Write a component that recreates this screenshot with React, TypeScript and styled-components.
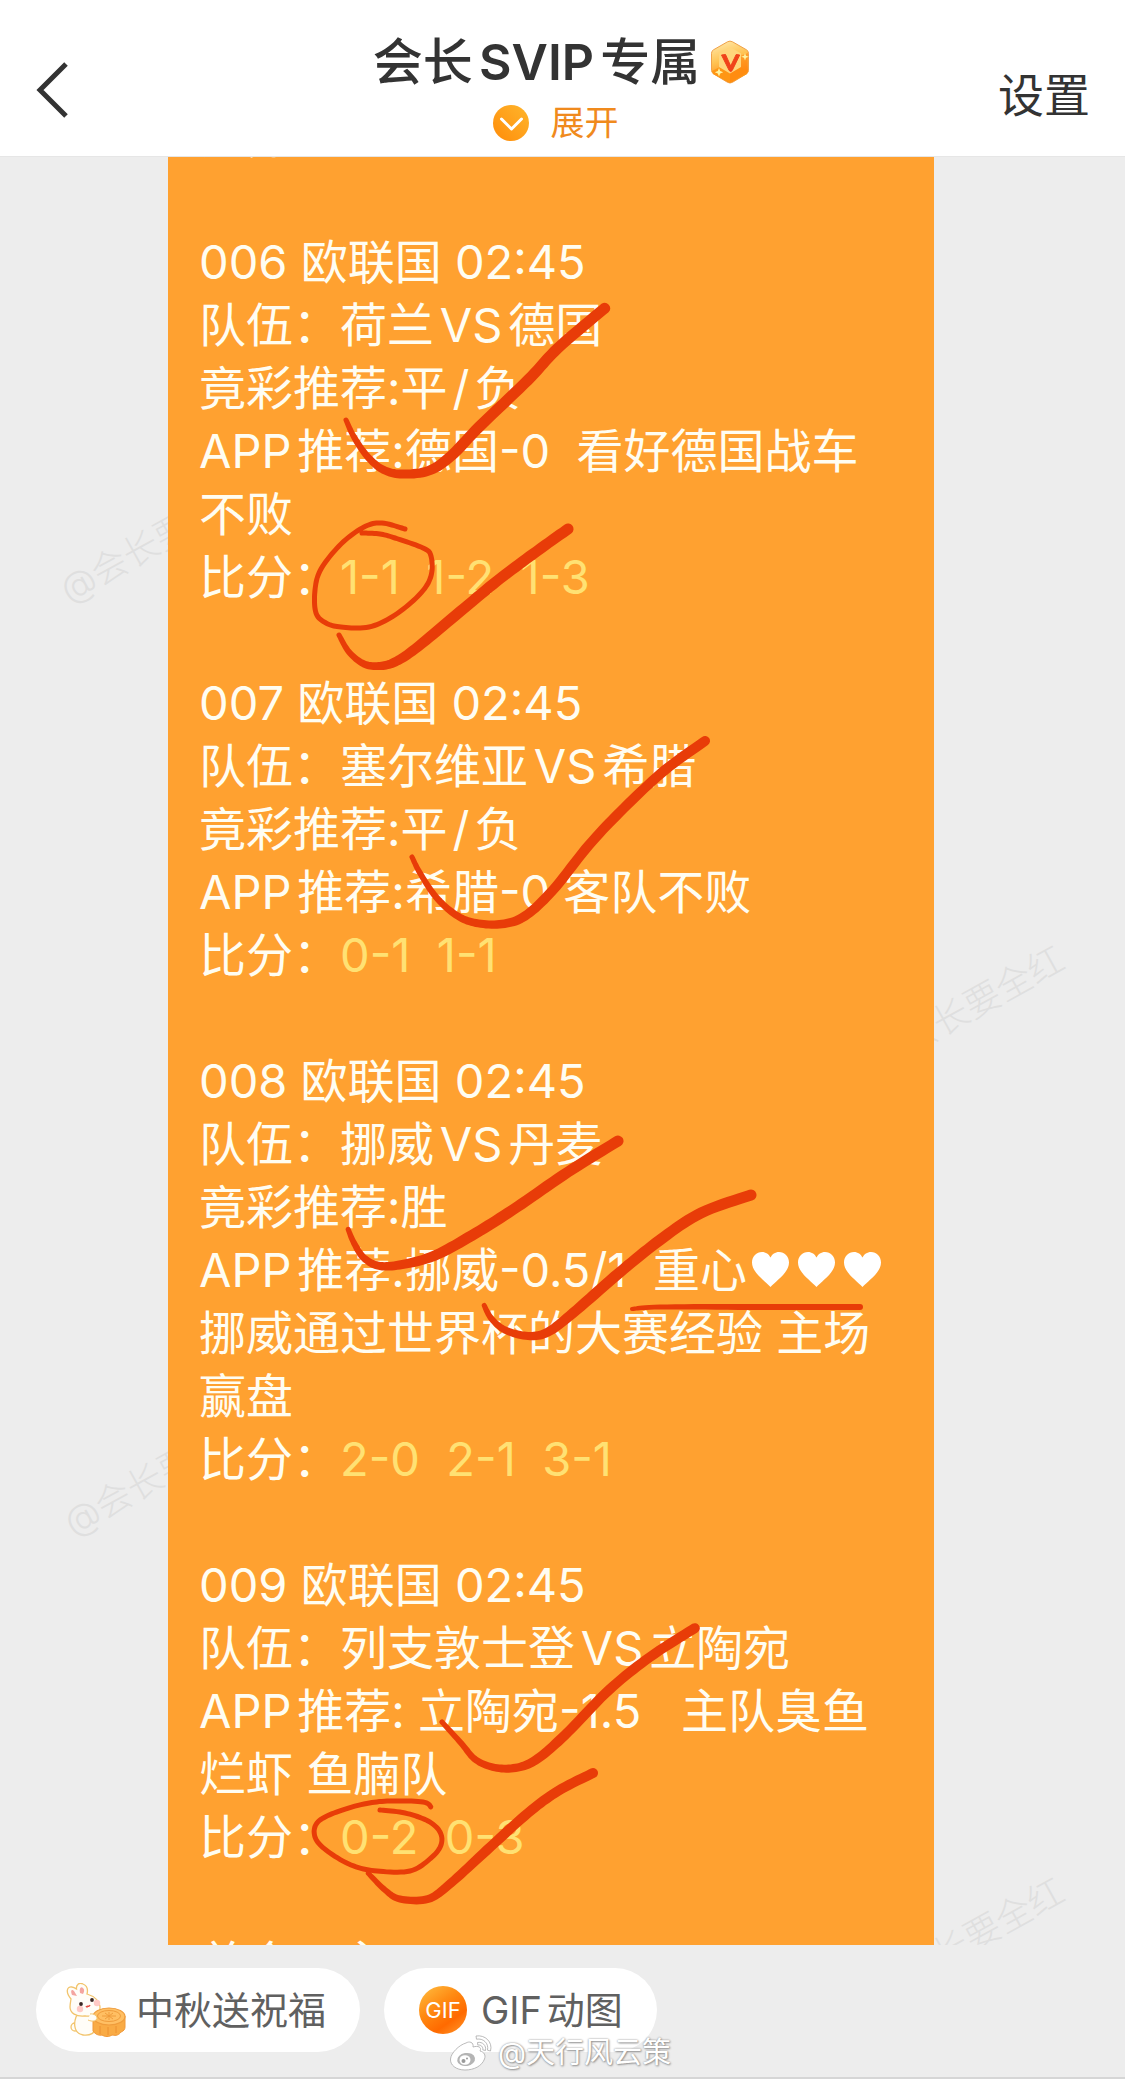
import React from "react";
import styled, { createGlobalStyle } from "styled-components";

const GlobalStyle = createGlobalStyle`
  * { box-sizing: border-box; }
  body {
    margin: 0;
    background: #ededed;
    font-family: Inter, "Noto Sans CJK SC", sans-serif;
    text-autospace: normal;
  }
  button {
    border: 0;
    margin: 0;
    padding: 0;
    background: none;
    color: inherit;
    font: inherit;
    cursor: pointer;
  }
  h1, p { margin: 0; }
  svg { display: block; flex: none; }
`;

const Screen = styled.div`
  position: relative;
  display: flex;
  flex-direction: column;
  height: 100vh;
`;

const Header = styled.header`
  display: grid;
  grid-template-columns: 1fr auto 1fr;
  flex: none;
  height: 157px;
  padding: 32px 35px 0 33px;
  background: #fff;
  border-bottom: 1px solid #e6e6e6;
  color: #333;
`;

const BackButton = styled.button`
  justify-self: start;
  align-self: start;
  padding: 28px 0 0 2px;
`;

const SettingsButton = styled.button`
  justify-self: end;
  align-self: start;
  padding-top: 33px;
  font-size: 46px;
  line-height: 60px;
`;

const Heading = styled.div`
  display: flex;
  flex-direction: column;
  align-items: center;
`;

const Title = styled.h1`
  display: flex;
  align-items: center;
  gap: 10px;
  font-size: 50px;
  line-height: 60px;
  font-weight: 500;
`;

const TitleLatin = styled.b`
  font-weight: 600;
`;

const ExpandButton = styled.button`
  display: flex;
  align-items: center;
  gap: 22px;
  height: 62px;
  padding-right: 12px;
  font-size: 34px;
  line-height: 40px;
  color: #f08a1d;
`;

const Chat = styled.main`
  position: relative;
  flex: 1;
  min-height: 0;
  overflow: hidden;
  padding: 0 191px 0 168px;
`;

const Watermark = styled.span<{ $x: number; $y: number }>`
  position: absolute;
  left: ${(p) => p.$x}px;
  top: ${(p) => p.$y}px;
  transform: translate(-50%, -50%) rotate(-29deg);
  font-size: 36px;
  line-height: 40px;
  white-space: nowrap;
  font-weight: 300;
  color: #dfdfdf;
`;

const Card = styled.article`
  position: relative;
  height: 100%;
  overflow: hidden;
  background: #ffa130;
`;

const Feed = styled.div`
  display: flex;
  flex-direction: column;
  gap: 63px;
  margin-top: -53px;
  padding: 0 31px;
`;

const Match = styled.p`
  font-size: 47px;
  line-height: 63px;
  font-weight: 400;
  white-space: pre;
  color: #fffdf2;
`;

const Slash = styled.span`
  margin: 0 5px;
`;

const Score = styled.span`
  color: #ffe173;
`;

const Hearts = styled.span`
  display: inline-flex;
  gap: 9px;
  margin-left: 5px;
`;

const Ink = styled.svg`
  position: absolute;
  left: 0;
  top: 0;
  pointer-events: none;
`;

const Footer = styled.footer`
  display: flex;
  flex: none;
  gap: 24px;
  height: 134px;
  padding: 23px 36px 0;
  border-bottom: 2px solid #d6d6d6;
`;

const Chip = styled.button`
  display: flex;
  align-items: center;
  gap: 10px;
  height: 84px;
  padding: 0 34px 0 30px;
  border-radius: 42px;
  background: #fff;
  font-size: 38px;
  line-height: 48px;
  color: #606060;
`;

const GifBadge = styled.span`
  display: grid;
  place-items: center;
  width: 48px;
  height: 48px;
  margin: 0 4px 0 5px;
  border-radius: 50%;
  background: linear-gradient(145deg, #ffc043 0%, #ff8a12 40%, #ff6a00 70%, #ff9c30 100%);
  color: #fff;
  font-size: 22px;
  line-height: 24px;
`;

const Credit = styled.div`
  position: absolute;
  left: 449px;
  bottom: 8px;
  display: flex;
  align-items: center;
  gap: 5px;
  font-size: 29px;
  line-height: 36px;
  color: #fff;
  text-shadow: 0 0 2px #888, 1px 1px 2px #999;
`;

type Pt = [number, number];

/** A brush stroke that runs through the points and swells from one width to another. */
function brush(points: Pt[], from: number, to: number) {
  const samples: Pt[] = [];
  const steps = 10;
  for (let i = 0; i < points.length - 1; i++) {
    const a = points[Math.max(0, i - 1)];
    const b = points[i];
    const c = points[i + 1];
    const d = points[Math.min(points.length - 1, i + 2)];
    for (let s = 0; s < steps; s++) {
      const t = s / steps;
      const at = (k: 0 | 1) =>
        0.5 *
        (2 * b[k] +
          (c[k] - a[k]) * t +
          (2 * a[k] - 5 * b[k] + 4 * c[k] - d[k]) * t * t +
          (3 * b[k] - a[k] - 3 * c[k] + d[k]) * t * t * t);
      samples.push([at(0), at(1)]);
    }
  }
  samples.push(points[points.length - 1]);
  const left: string[] = [];
  const right: string[] = [];
  const n = samples.length;
  samples.forEach((p, i) => {
    const q = samples[Math.min(n - 1, i + 1)];
    const o = samples[Math.max(0, i - 1)];
    const dx = q[0] - o[0];
    const dy = q[1] - o[1];
    const len = Math.hypot(dx, dy) || 1;
    const r = (from + (to - from) * Math.min(1, (i / n) * 1.6)) / 2;
    left.push(`${(p[0] - (dy / len) * r).toFixed(1)} ${(p[1] + (dx / len) * r).toFixed(1)}`);
    right.unshift(`${(p[0] + (dy / len) * r).toFixed(1)} ${(p[1] - (dx / len) * r).toFixed(1)}`);
  });
  return `M${left.join("L")}A${to / 2} ${to / 2} 0 0 0 ${right[0]}L${right.join("L")}A${from / 2} ${from / 2} 0 0 0 ${left[0]}Z`;
}

const strokes: { from: number; to: number; points: Pt[] }[] = [
  { from: 5, to: 11, points: [[346, 420], [354, 437], [367, 456], [382, 469], [400, 474], [428, 471], [451, 456], [479, 427], [528, 380], [558, 348], [605, 308]] },
  { from: 5, to: 5, points: [[405, 529], [382, 523], [364, 527], [341, 544], [321, 569], [315, 590], [316, 613], [326, 623], [341, 627], [369, 627], [395, 615], [420, 594], [431, 576], [431, 556], [423, 548], [395, 538], [380, 534], [362, 533]] },
  { from: 5, to: 11, points: [[339, 635], [349, 652], [364, 664], [380, 666], [395, 662], [415, 649], [456, 615], [497, 581], [533, 554], [568, 529]] },
  { from: 5, to: 10, points: [[412, 857], [420, 873], [436, 897], [456, 915], [476, 923], [502, 924], [525, 916], [553, 890], [589, 845], [624, 808], [665, 770], [705, 741]] },
  { from: 5, to: 11, points: [[348, 1229], [354, 1243], [364, 1258], [380, 1266], [405, 1264], [436, 1255], [476, 1233], [517, 1207], [568, 1172], [618, 1141]] },
  { from: 5, to: 11, points: [[484, 1305], [491, 1318], [505, 1330], [528, 1336], [548, 1332], [573, 1313], [619, 1273], [660, 1240], [701, 1213], [751, 1195]] },
  { from: 4, to: 6, points: [[632, 1309], [660, 1307], [760, 1307], [860, 1307]] },
  { from: 5, to: 10, points: [[442, 1722], [461, 1743], [476, 1760], [497, 1768], [520, 1767], [540, 1757], [568, 1732], [609, 1690], [650, 1657], [695, 1628]] },
  { from: 5, to: 5, points: [[431, 1807], [423, 1802], [390, 1801], [364, 1804], [334, 1813], [317, 1823], [315, 1837], [326, 1850], [351, 1865], [377, 1871], [410, 1871], [431, 1858], [441, 1845], [440, 1832], [428, 1821], [405, 1813], [380, 1810]] },
  { from: 5, to: 10, points: [[368, 1873], [385, 1890], [400, 1899], [428, 1899], [451, 1883], [487, 1850], [528, 1813], [558, 1791], [593, 1773]] },
];

const Heart = () => (
  <svg width="37" height="35" viewBox="0 0 37 35" aria-hidden="true">
    <path fill="#fff" d="M18.500 35C13 29 0 20.500 0 10.500 0 4.500 4.500 0 10 0c3.800 0 7 2.200 8.500 5.600C20 2.200 23.200 0 27 0c5.500 0 10 4.500 10 10.500C37 20.500 24 29 18.500 35z" />
  </svg>
);

const Gem = () => (
  <svg width="40" height="44" viewBox="0 0 40 44" aria-hidden="true">
    <defs>
      <linearGradient id="gem" x1="0" y1="0" x2="0.300" y2="1">
        <stop offset="0" stopColor="#ffedb5" />
        <stop offset="0.500" stopColor="#ffc352" />
        <stop offset="1" stopColor="#ff7d0c" />
      </linearGradient>
    </defs>
    <path d="M17.500 1.800q2.500-1.400 5 0l14 8q2 1.200 2 3.500v17q0 2.300-2 3.500l-14 8.500q-2.500 1.400-5 0l-14-8.500q-2-1.200-2-3.500v-17q0-2.300 2-3.500z" fill="url(#gem)" stroke="#f0a24a" />
    <path d="M2 31l8-4 10 6 10-6 8 4-1 3-17 9-17-9z" fill="#ff9614" />
    <path d="M20 33v9.500L37 32.500 38 13l-8 3v11z" fill="#ff850c" opacity=".55" />
    <path d="M20 7l11 6.500v13.500l-11 6.500-11-6.500v-13.500z" fill="#ffd57c" />
    <path d="M11.500 15l4-.500 5.200 11.500 5.500-11.500 3.500.500-7.500 15.500q-1.400 2.200-3 0z" fill="#f0421a" stroke="#f0421a" strokeLinejoin="round" />
    <path d="M35 13l1 2.800 2.800 1-2.800 1-1 2.800-1-2.800-2.800-1 2.800-1zM9 28l1.200 3 3 1.200-3 1.200-1.200 3-1.200-3-3-1.200 3-1.200z" fill="#fff3a0" />
  </svg>
);

const Rabbit = () => (
  <svg width="60" height="54" viewBox="0 0 60 54" aria-hidden="true">
    <g fill="#fffdf8" stroke="#f2c46c" strokeWidth="1.300">
      <circle cx="9" cy="44" r="4" />
      <path d="M10 34c-3 8-1 17 7 18 7 1 13-2 12-8l-2-16-13-1z" />
      <path d="M5 16C-1 9 1 3 6 4c2 .300 3 1 4.500 2C10 2 13-1 17 1c5 2 5 6 4 10 7 2 13 7 13 14 0 6-6 9-15 8C10 34 4 30 4 24c0-3 .500-5 1-8z" />
    </g>
    <path d="M6 12c-2-5 0-6 2-4l3 5zM14 10c-1-5 1-7 3-5s1 4 0 6z" fill="#f4a5a0" />
    <circle cx="14" cy="26" r="3.200" fill="#ffc9c5" />
    <circle cx="31" cy="20" r="3.200" fill="#ffc9c5" />
    <circle cx="15" cy="21" r="1.900" fill="#3a2624" />
    <circle cx="26" cy="17" r="1.900" fill="#3a2624" />
    <path d="M20 23q1 2 2 0q1 1 2-1" fill="none" stroke="#e8453c" strokeWidth="1.300" />
    <path d="M27 34v14c2 3 6 5 9 4 3 2 7 2 10 0 4 1 7 0 9-3 3-1 4-3 4-5V33z" fill="#f9ab45" stroke="#f0993a" />
    <path d="M34 43v8M42 44v8M50 43v7" stroke="#ec9033" />
    <ellipse cx="43" cy="33.500" rx="16" ry="8.500" fill="#ffbf63" stroke="#ef9c3c" strokeWidth="1.200" />
    <ellipse cx="43" cy="33" rx="11.500" ry="5.500" fill="none" stroke="#ef9c3c" />
    <path d="M36 33h14M43 29v8M39 30l8 6M47 30l-8 6" stroke="#ef9c3c" />
    <path d="M24 31c5-1 9 4 6 6-2 2-6 1-8 0" fill="#fffdf8" stroke="#f2c46c" />
  </svg>
);

const WeiboMark = () => (
  <svg width="44" height="36" viewBox="0 0 44 36" aria-hidden="true">
    <g fill="#fff" stroke="#aaa" strokeWidth=".8">
      <path d="M17 8c3-2 8-1 7 4 5-1.500 9 0 7 4 4 1 6 4 4.500 8C33 31 25 35 16 35 7 35 1 30 1.500 24 2 18 10 10 17 8z" />
      <path d="M27 1c9-1.500 17 6 14.500 15l-3-.800C40 8 34 3 27.500 4.200z" />
      <path d="M28.500 7.500c5-1 9 3 8 8l-2.700-.600c.600-3-2-5.500-5-4.800z" />
    </g>
    <ellipse cx="17" cy="24.500" rx="9" ry="6.500" fill="#b4b4b4" transform="rotate(-10 17 24)" />
    <ellipse cx="16" cy="25" rx="5.500" ry="4.800" fill="#fff" />
    <circle cx="14.500" cy="26" r="2" fill="#9a9a9a" />
    <circle cx="18" cy="23.500" r="1" fill="#9a9a9a" />
  </svg>
);

const marks: Pt[] = [[157, 383], [161, 1316], [967, 851], [967, 1783]];

export default function App() {
  return (
    <Screen>
      <GlobalStyle />
      <Header>
        <BackButton aria-label="返回">
          <svg width="34" height="60" viewBox="0 0 34 60" aria-hidden="true">
            <path d="M31 4L5 30l26 26" fill="none" stroke="#333" strokeWidth="5" />
          </svg>
        </BackButton>
        <Heading>
          <Title>
            <span>会长<TitleLatin>SVIP</TitleLatin>专属</span>
            <Gem />
          </Title>
          <ExpandButton>
            <svg width="36" height="36" viewBox="0 0 36 36" aria-hidden="true">
              <defs>
                <linearGradient id="dot" x1="0" y1="1" x2="1" y2="0">
                  <stop offset="0" stopColor="#ff8c0a" />
                  <stop offset="1" stopColor="#ffb62c" />
                </linearGradient>
              </defs>
              <circle cx="18" cy="18" r="18" fill="url(#dot)" />
              <path d="M8.500 14l10 10 10-10" fill="none" stroke="#fff" strokeWidth="3" strokeLinecap="round" strokeLinejoin="round" />
            </svg>
            展开
          </ExpandButton>
        </Heading>
        <SettingsButton>设置</SettingsButton>
      </Header>

      <Chat>
        {marks.map(([x, y]) => (
          <Watermark key={`${x}-${y}`} $x={x} $y={y}>@会长要全红</Watermark>
        ))}
        <Card>
          <Feed>
            <Match>比分：</Match>
            <Match>
              {"006 欧联国 02:45\n队伍：荷兰VS德国\n竟彩推荐:平"}
              <Slash>/</Slash>
              {"负\nAPP推荐:德国-0  看好德国战车\n不败\n比分："}
              <Score>{"1-1  1-2  1-3"}</Score>
            </Match>
            <Match>
              {"007 欧联国 02:45\n队伍：塞尔维亚VS希腊\n竟彩推荐:平"}
              <Slash>/</Slash>
              {"负\nAPP推荐:希腊-0 客队不败\n比分："}
              <Score>{"0-1  1-1"}</Score>
            </Match>
            <Match>
              {"008 欧联国 02:45\n队伍：挪威VS丹麦\n竟彩推荐:胜\nAPP推荐:挪威-0.5/1  重心"}
              <Hearts><Heart /><Heart /><Heart /></Hearts>
              {"\n挪威通过世界杯的大赛经验 主场\n赢盘\n比分："}
              <Score>{"2-0  2-1  3-1"}</Score>
            </Match>
            <Match>
              {"009 欧联国 02:45\n队伍：列支敦士登VS立陶宛\nAPP推荐: 立陶宛-1.5   主队臭鱼\n烂虾 鱼腩队\n比分："}
              <Score>{"0-2  0-3"}</Score>
            </Match>
            <Match>总会：主</Match>
          </Feed>
          <Ink width="766" height="1788" viewBox="168 157 766 1788" aria-hidden="true">
            {strokes.map((s, i) => (
              <path key={i} d={brush(s.points, s.from, s.to)} fill="#e83c08" />
            ))}
          </Ink>
        </Card>
      </Chat>

      <Footer>
        <Chip><Rabbit />中秋送祝福</Chip>
        <Chip><GifBadge>GIF</GifBadge>GIF动图</Chip>
      </Footer>
      <Credit><WeiboMark />@天行风云策</Credit>
    </Screen>
  );
}
